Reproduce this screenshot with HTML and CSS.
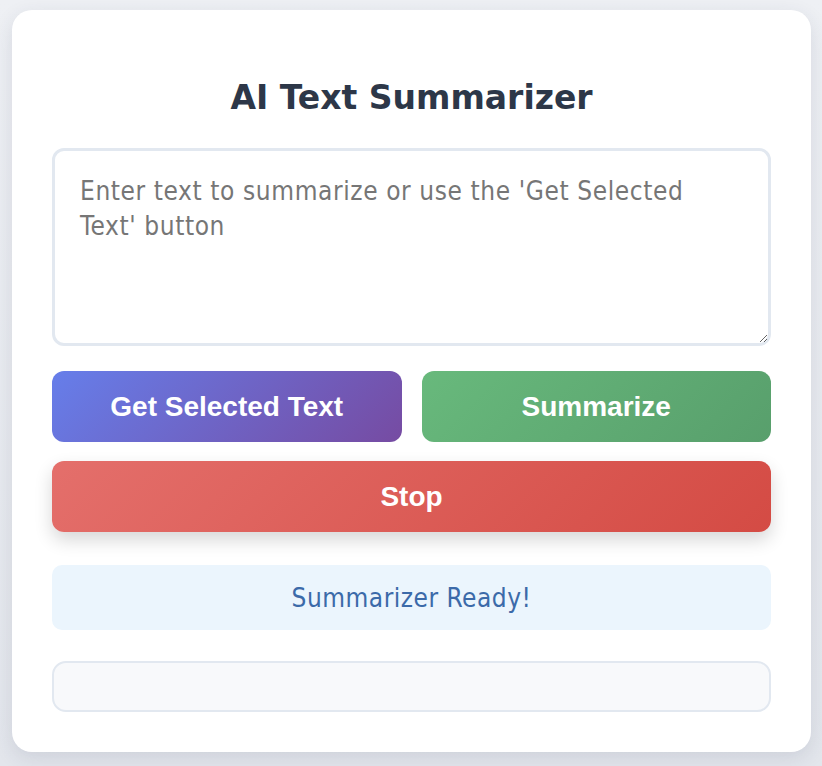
FILE: index.html
```html
<!DOCTYPE html>
<html>
<head>
<meta charset="utf-8">
<link rel="stylesheet" href="styles.css">
</head>
<body>
<main class="card">
  <h1 class="title">AI Text Summarizer</h1>
  <textarea class="input" placeholder="Enter text to summarize or use the 'Get Selected Text' button"></textarea>
  <div class="row">
    <button class="btn btn-purple">Get Selected Text</button>
    <button class="btn btn-green">Summarize</button>
  </div>
  <button class="btn btn-red">Stop</button>
  <div class="status">Summarizer Ready!</div>
  <div class="output"></div>
</main>
</body>
</html>
```

FILE: styles.css
```css
html, body {
  margin: 0;
  padding: 0;
}
body {
  width: 822px;
  height: 766px;
  overflow: hidden;
  background: linear-gradient(180deg, #eef0f4 0%, #e3e6ec 100%);
  box-sizing: border-box;
  padding: 10px 11px 0 12px;
  font-family: "DejaVu Sans Condensed", "DejaVu Sans", sans-serif;
}
.card {
  background: #ffffff;
  border-radius: 20px;
  box-shadow: 0 6px 20px rgba(40, 50, 80, 0.12);
  padding: 68px 40px 40px;
  display: flex;
  flex-direction: column;
  height: 742px;
  box-sizing: border-box;
}
.title {
  margin: 0 0 30px;
  text-align: center;
  font-family: "DejaVu Sans", sans-serif;
  font-size: 33px;
  line-height: 40px;
  font-weight: bold;
  color: #2d3748;
}
.input {
  display: block;
  width: 100%;
  height: 198px;
  box-sizing: border-box;
  border: 3px solid #e2e8f0;
  border-radius: 12px;
  padding: 23px 25px;
  font-family: "DejaVu Sans Condensed", "DejaVu Sans", sans-serif;
  font-size: 26px;
  letter-spacing: 0.6px;
  line-height: 35px;
  color: #333;
  resize: vertical;
  outline: none;
  margin: 0 0 25px;
}
.input::placeholder {
  color: #767676;
}
.row {
  display: flex;
  gap: 20px;
  margin-bottom: 19px;
}
.btn {
  border: none;
  border-radius: 12px;
  height: 71px;
  color: #fff;
  font-family: "Liberation Sans", Arial, sans-serif;
  font-weight: bold;
  font-size: 28px;
  cursor: pointer;
  padding: 0;
}
.row .btn {
  flex: 1;
}
.btn-purple {
  background: linear-gradient(135deg, #667eea 0%, #764ba2 100%);
}
.btn-green {
  background: linear-gradient(135deg, #68b97c 0%, #589f6c 100%);
}
.btn-red {
  width: 100%;
  background: linear-gradient(135deg, #e46f6b 0%, #d44b44 100%);
  box-shadow: 0 8px 18px rgba(0, 0, 0, 0.16);
  margin-bottom: 33px;
}
.status {
  background: #ebf5fd;
  color: #3b6aa9;
  border-radius: 10px;
  height: 65px;
  display: flex;
  align-items: center;
  justify-content: center;
  font-size: 26px;
  letter-spacing: 0.5px;
  margin-bottom: 31px;
}
.output {
  height: 51px;
  box-sizing: border-box;
  background: #f8f9fb;
  border: 2px solid #e2e8f0;
  border-radius: 14px;
}
```
